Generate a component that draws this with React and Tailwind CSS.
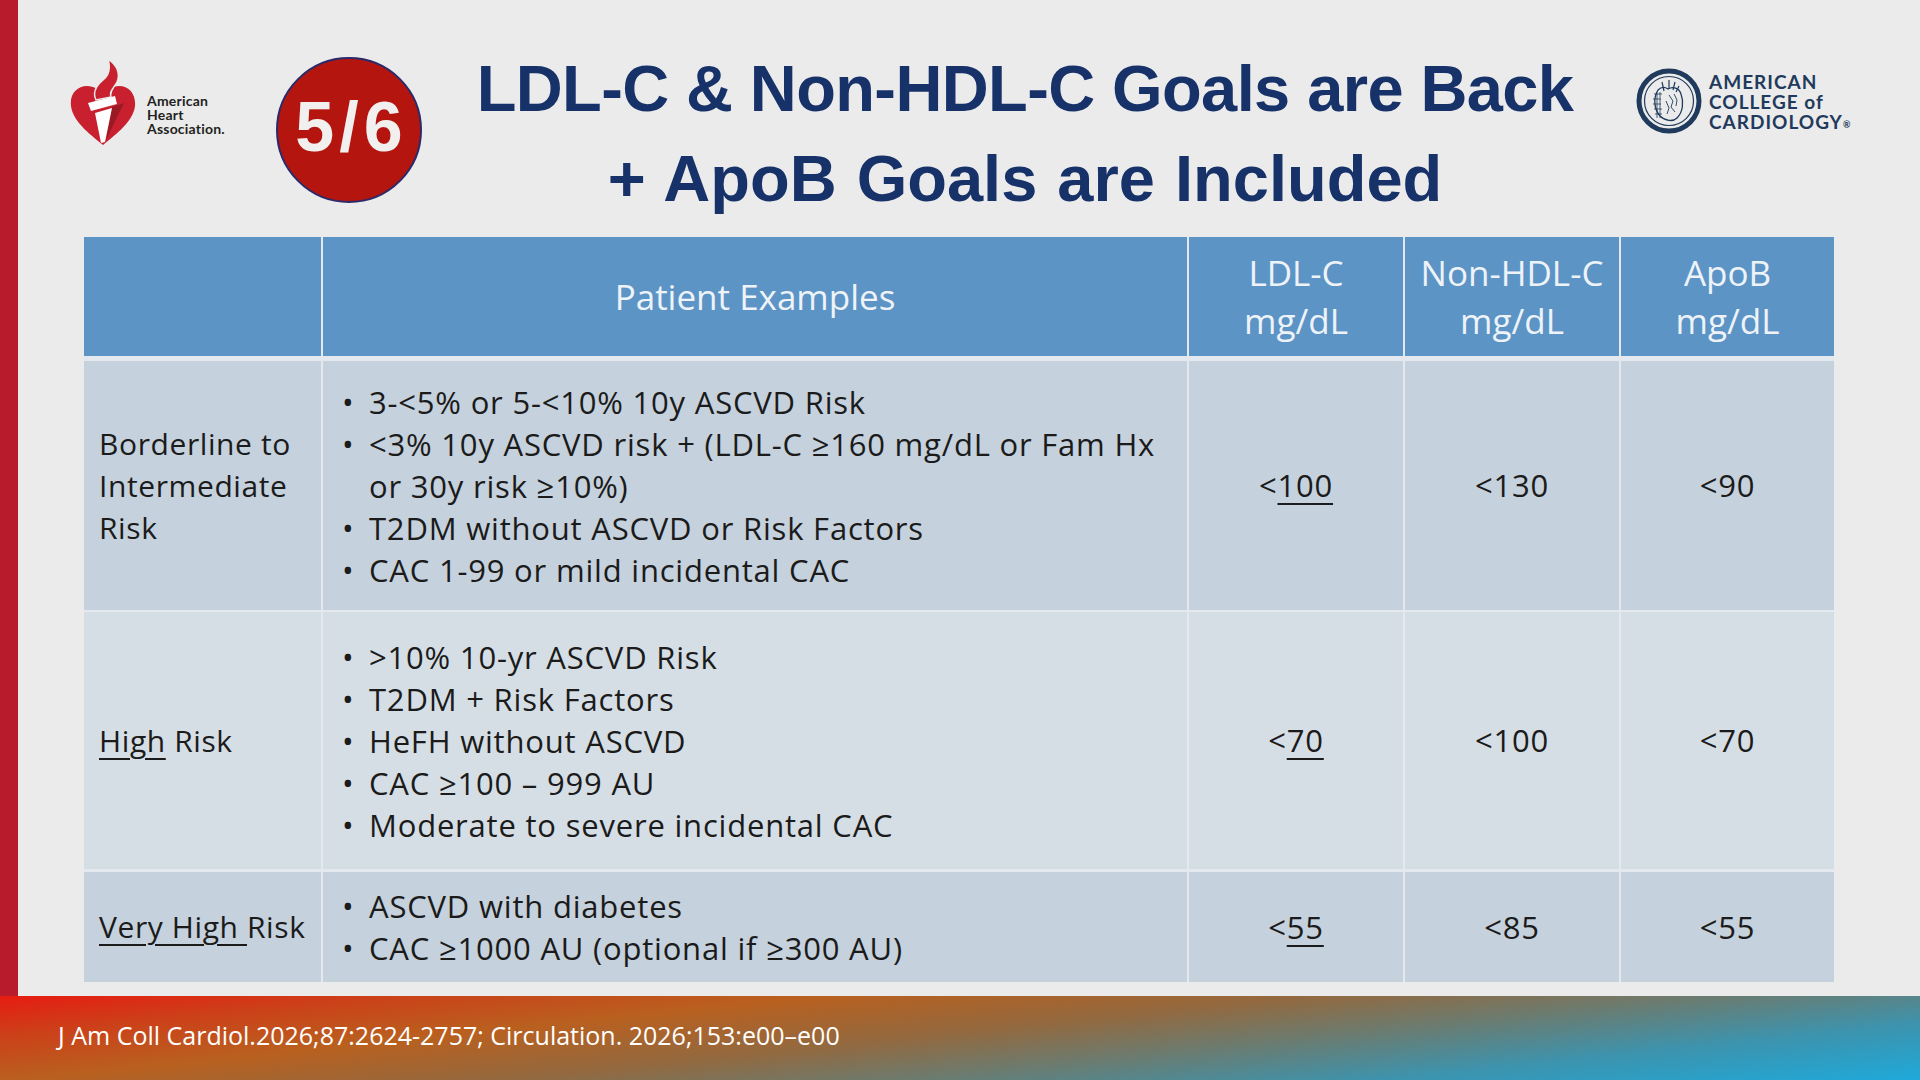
import React from 'react';

const COLS = ['w-[237px]', 'w-[864px]', 'w-[214px]', 'w-[214px]', 'w-[213px]'];

const ROWS = [
  {
    h: 'h-[249px] mt-[5px]',
    bg: 'bg-[#c5d1dc]',
    label: <>Borderline to<br />Intermediate<br />Risk</>,
    bullets: [
      ['3-<5% or 5-<10% 10y ASCVD Risk'],
      ['<3% 10y ASCVD risk + (LDL-C ≥160 mg/dL or Fam Hx', 'or 30y risk ≥10%)'],
      ['T2DM without ASCVD or Risk Factors'],
      ['CAC 1-99 or mild incidental CAC'],
    ],
    values: [['<', '100'], ['<130'], ['<90']],
  },
  {
    h: 'h-[257px] mt-[2px]',
    bg: 'bg-[#d6dee5]',
    label: <><span className="underline decoration-[2px] underline-offset-[6px]">High</span> Risk</>,
    bullets: [
      ['>10% 10-yr ASCVD Risk'],
      ['T2DM + Risk Factors'],
      ['HeFH without ASCVD'],
      ['CAC ≥100 – 999 AU'],
      ['Moderate to severe incidental CAC'],
    ],
    values: [['<', '70'], ['<100'], ['<70']],
  },
  {
    h: 'h-[110px] mt-[3px]',
    bg: 'bg-[#c5d1dc]',
    label: <><span className="underline decoration-[2px] underline-offset-[6px] whitespace-pre">Very High </span>Risk</>,
    bullets: [
      ['ASCVD with diabetes'],
      ['CAC ≥1000 AU (optional if ≥300 AU)'],
    ],
    values: [['<', '55'], ['<85'], ['<55']],
  },
];

export default function App() {
  return (
    <div className="w-[1920px] h-[1080px] bg-[#ebebeb] flex flex-col overflow-hidden font-['Open_Sans',sans-serif] text-[#1b1b1b]">
      <div className="flex flex-1 min-h-0">
        <div className="w-[18px] bg-[#b81c2c]" />
        <div className="flex-1 flex flex-col">
          <header className="h-[237px] flex items-start">
            <div className="w-[258px] pl-[52px] pt-[58px] flex">
              <AhaHeart />
              <div className="ml-[11px] mt-[36px] font-['Lato',sans-serif] font-bold text-[14px] leading-[14px] tracking-[0.2px] text-[#231f20]">
                American<br />Heart<br />Association.
              </div>
            </div>
            <div className="mt-[57px] w-[146px] h-[146px] shrink-0 rounded-full bg-[#b5150f] border-[2px] border-[#2a2a6a] flex items-center justify-center pb-[6px]">
              <span className="font-['Liberation_Sans',Arial,sans-serif] font-bold text-[70px] tracking-[5px] pl-[5px] text-[#f2efef]">5/6</span>
            </div>
            <h1 className="flex-1 mt-[44px] text-center font-['Liberation_Sans',Arial,sans-serif] font-bold text-[65px] leading-[90px] tracking-[-0.6px] text-[#173169]">
              LDL-C &amp; Non-HDL-C Goals are Back<br />
              <span className="tracking-[0px] [word-spacing:2px]">+ ApoB Goals are Included</span>
            </h1>
            <div className="w-[292px] pl-[8px] pt-[68px] flex">
              <AccSeal />
              <div className="ml-[7px] mt-[5px] flex flex-col gap-[2px] font-['Lato',sans-serif] font-bold text-[19px] leading-[18px] tracking-[1px] text-[#1f3a5c]">
                <div>AMERICAN</div>
                <div>COLLEGE of</div>
                <div>CARDIOLOGY<span className="text-[9px] align-[1px]">®</span></div>
              </div>
            </div>
          </header>

          <div className="ml-[66px] w-[1750px] flex flex-col bg-[#e3e9ee]">
            <div className="h-[119px] flex gap-[2px] text-[35px] leading-[48px] text-[#eef3f8]">
              <div className={`${COLS[0]} bg-[#5d94c6]`} />
              <div className={`${COLS[1]} bg-[#5d94c6] flex items-center justify-center`}>Patient Examples</div>
              <HeadCell cls={COLS[2]} a="LDL-C" />
              <HeadCell cls={COLS[3]} a="Non-HDL-C" />
              <HeadCell cls={COLS[4]} a="ApoB" />
            </div>
            {ROWS.map((r, i) => (
              <div key={i} className={`${r.h} flex gap-[2px]`}>
                <div className={`${COLS[0]} ${r.bg} flex items-center pl-[15px] text-[30px] leading-[42px] font-medium tracking-[0.6px]`}>
                  <div>{r.label}</div>
                </div>
                <div className={`${COLS[1]} ${r.bg} flex flex-col justify-center pl-[19px] text-[31px] leading-[42px] tracking-[0.8px]`}>
                  {r.bullets.map((b, j) => (
                    <div key={j} className="flex">
                      <span className="w-[27px] shrink-0">•</span>
                      <div className="whitespace-nowrap">
                        {b.map((line, k) => <div key={k}>{line}</div>)}
                      </div>
                    </div>
                  ))}
                </div>
                {r.values.map((v, j) => (
                  <div key={j} className={`${COLS[j + 2]} ${r.bg} flex items-center justify-center text-[31px] tracking-[0.8px]`}>
                    {v.length === 2 ? (
                      <span>{v[0]}<span className="underline decoration-[2px] underline-offset-[6px]">{v[1]}</span></span>
                    ) : (
                      <span>{v[0]}</span>
                    )}
                  </div>
                ))}
              </div>
            ))}
          </div>
        </div>
      </div>
      <footer className="h-[84px] shrink-0 flex items-center pl-[58px] pb-[5px] bg-[linear-gradient(174deg,#e61c12_0%,#cc4019_14%,#b9601f_30%,#93693f_48%,#6e7a6c_62%,#3d93ad_80%,#1ea9da_100%)]">
        <span className="text-[25px] text-white">J Am Coll Cardiol.2026;87:2624-2757; Circulation. 2026;153:e00–e00</span>
      </footer>
    </div>
  );
}

function HeadCell({ cls, a }) {
  return (
    <div className={`${cls} bg-[#5d94c6] flex flex-col items-center justify-center`}>
      <div>{a}</div>
      <div>mg/dL</div>
    </div>
  );
}

function AhaHeart() {
  return (
    <svg width="66" height="88" viewBox="0 0 66 88" className="shrink-0">
      <path
        d="M33 87 C24 79 3 65 1 48 C-0.5 36 7 28 17 28 C24 28 30 32 33 37 C36 32 42 28 49 28 C59 28 66 36 65 48 C63 65 42 79 33 87 Z"
        fill="#c8202f"
      />
      <path d="M42 49 L54 45 L36 82 Z" fill="#9a1a24" />
      <path d="M18 45 L45 38 L47 46 L21 53 Z" fill="#ffffff" />
      <path d="M25 55 L42 50 L35 84 L31 85 Z" fill="#ffffff" />
      <path
        d="M26 42 C22 34 27 27 33 22 C38 18 41 11 38 1 C46 6 51 15 47 24 C44 30 39 33 41 39 Z"
        fill="#c8202f"
        stroke="#ebebeb"
        strokeWidth="1.5"
      />
    </svg>
  );
}

function AccSeal() {
  return (
    <svg width="66" height="66" viewBox="0 0 66 66" className="shrink-0" fill="none" stroke="#1f3a5c">
      <circle cx="33" cy="33" r="30" strokeWidth="5" />
      <circle cx="33" cy="33" r="24.5" strokeWidth="1.2" />
      <path d="M22 22 C17 30 18 41 24 48 C29 53 37 54 41 50 C47 44 48 34 45 26 C43 20 37 18 32 21 C29 19 25 19 22 22 Z" strokeWidth="1.3" />
      <path d="M26 14 L28 23 M33 12 L33 21 M39 14 L37 22 M43 18 L40 24" strokeWidth="1.2" />
      <path d="M18 26 L26 26 M17 31 L25 31 M17 36 L25 36 M18 41 L26 41 M19 46 L26 46 M21 24 L21 50 M24 24 L24 50" strokeWidth="0.8" />
      <path d="M33 27 L37 33 L35 39 L39 44 M38 26 L41 32 L40 38 M30 33 L33 40 L31 46" strokeWidth="0.9" />
    </svg>
  );
}
